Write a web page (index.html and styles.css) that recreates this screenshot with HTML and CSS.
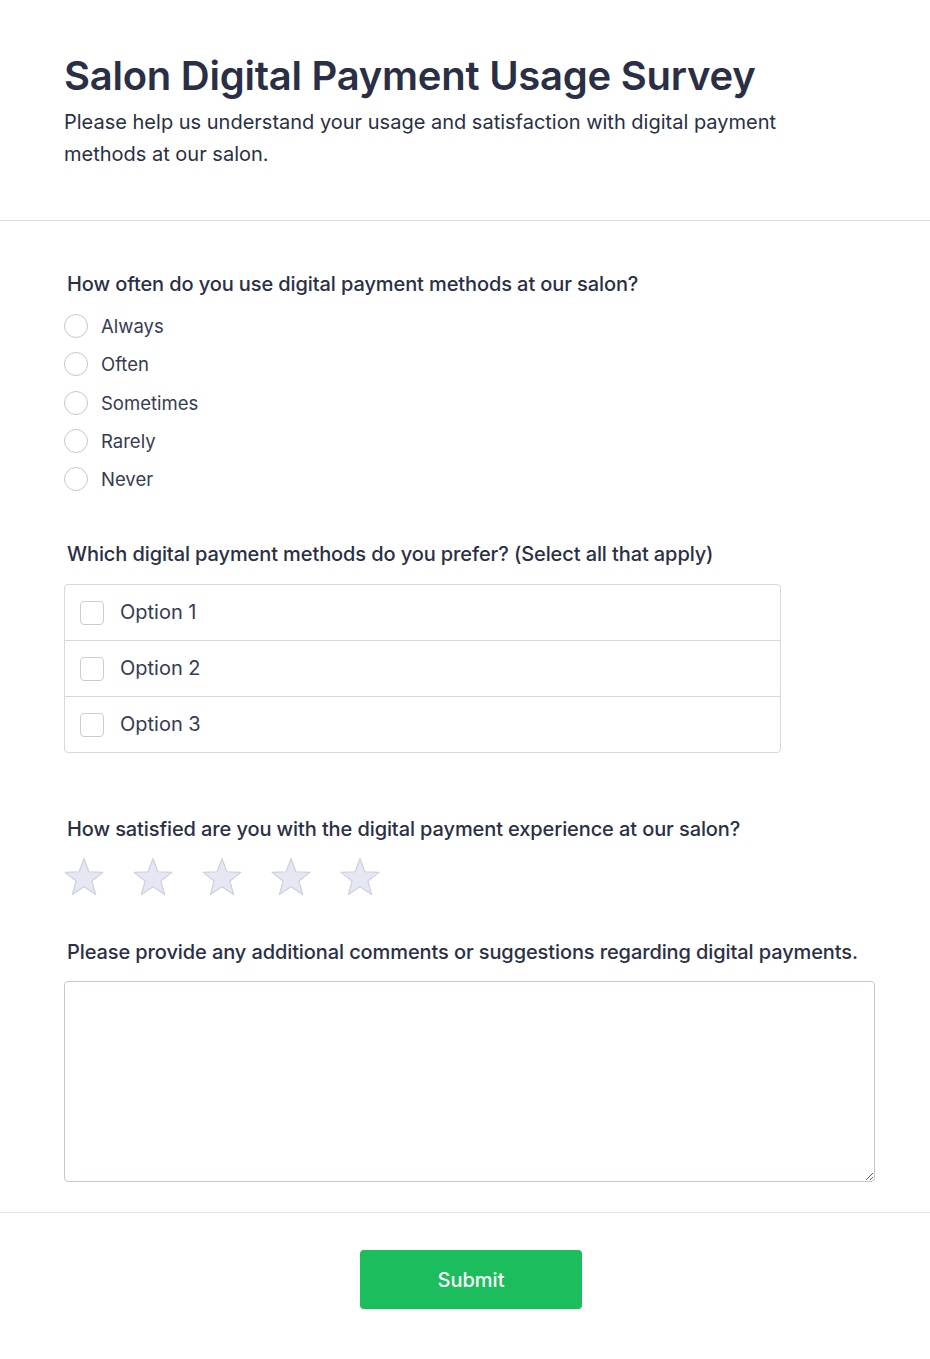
FILE: index.html
```html
<!DOCTYPE html>
<html lang="en">
<head>
<meta charset="utf-8">
<title>Salon Digital Payment Usage Survey</title>
<link rel="stylesheet" href="styles.css">
</head>
<body>
<header class="header">
  <h1 class="title">Salon Digital Payment Usage Survey</h1>
  <p class="desc">Please help us understand your usage and satisfaction with digital payment methods at our salon.</p>
</header>
<main class="main">
  <section class="question q-radio">
    <div class="qlabel">How often do you use digital payment methods at our salon?</div>
    <div class="radio-list">
      <label class="radio-row"><span class="radio"></span><span class="opt">Always</span></label>
      <label class="radio-row"><span class="radio"></span><span class="opt">Often</span></label>
      <label class="radio-row"><span class="radio"></span><span class="opt">Sometimes</span></label>
      <label class="radio-row"><span class="radio"></span><span class="opt">Rarely</span></label>
      <label class="radio-row"><span class="radio"></span><span class="opt">Never</span></label>
    </div>
  </section>
  <section class="question q-check">
    <div class="qlabel">Which digital payment methods do you prefer? (Select all that apply)</div>
    <div class="check-group">
      <label class="check-row"><span class="checkbox"></span><span class="opt">Option 1</span></label>
      <label class="check-row"><span class="checkbox"></span><span class="opt">Option 2</span></label>
      <label class="check-row"><span class="checkbox"></span><span class="opt">Option 3</span></label>
    </div>
  </section>
  <section class="question q-stars">
    <div class="qlabel">How satisfied are you with the digital payment experience at our salon?</div>
    <div class="stars">
      <svg class="star" viewBox="0 0 24 24"><path d="M12 1L14.94 8.85L23.32 9.22L16.76 14.45L18.99 22.53L12 17.9L5.01 22.53L7.24 14.45L0.68 9.22L9.06 8.85Z"/></svg>
      <svg class="star" viewBox="0 0 24 24"><path d="M12 1L14.94 8.85L23.32 9.22L16.76 14.45L18.99 22.53L12 17.9L5.01 22.53L7.24 14.45L0.68 9.22L9.06 8.85Z"/></svg>
      <svg class="star" viewBox="0 0 24 24"><path d="M12 1L14.94 8.85L23.32 9.22L16.76 14.45L18.99 22.53L12 17.9L5.01 22.53L7.24 14.45L0.68 9.22L9.06 8.85Z"/></svg>
      <svg class="star" viewBox="0 0 24 24"><path d="M12 1L14.94 8.85L23.32 9.22L16.76 14.45L18.99 22.53L12 17.9L5.01 22.53L7.24 14.45L0.68 9.22L9.06 8.85Z"/></svg>
      <svg class="star" viewBox="0 0 24 24"><path d="M12 1L14.94 8.85L23.32 9.22L16.76 14.45L18.99 22.53L12 17.9L5.01 22.53L7.24 14.45L0.68 9.22L9.06 8.85Z"/></svg>
    </div>
  </section>
  <section class="question q-text">
    <div class="qlabel">Please provide any additional comments or suggestions regarding digital payments.</div>
    <textarea class="comments"></textarea>
  </section>
</main>
<footer class="footer">
  <button class="submit" type="button">Submit</button>
</footer>
</body>
</html>
```

FILE: styles.css
```css
* { box-sizing: border-box; }

html, body {
  margin: 0;
  padding: 0;
  background: #ffffff;
}

body {
  font-family: Inter, "Noto Sans", "Liberation Sans", sans-serif;
  color: #2a2f45;
}

.header {
  padding: 52px 64px 50px;
  border-bottom: 1px solid #dcdde6;
}

.title {
  margin: 0;
  font-size: 40px;
  line-height: 48px;
  font-weight: 600;
  color: #2a2f45;
  letter-spacing: -0.25px;
}

.desc {
  margin: 6px 0 0;
  font-size: 20px;
  line-height: 32px;
  font-weight: 400;
  color: #2a2f45;
  max-width: 740px;
}

.main {
  padding: 50px 55px 30px 64px;
  display: flex;
  flex-direction: column;
}

.question {
  display: flex;
  flex-direction: column;
}

.qlabel {
  font-size: 20px;
  line-height: 26px;
  font-weight: 500;
  color: #2a2f45;
  padding-left: 3px;
  letter-spacing: -0.1px;
}

.q-radio .radio-list {
  margin-top: 10px;
  display: flex;
  flex-direction: column;
}

.radio-row {
  display: flex;
  align-items: center;
  height: 38.3px;
  gap: 13px;
}

.radio {
  width: 24px;
  height: 24px;
  border-radius: 50%;
  border: 1.5px solid #c3c6d3;
  background: #fff;
  flex: none;
}

.opt {
  font-size: 18.5px;
  line-height: 24px;
  color: #363b52;
}

.q-check {
  margin-top: 43px;
}

.check-group {
  margin-top: 17px;
  width: 717px;
  border: 1px solid #d7d9e1;
  border-radius: 4px;
  display: flex;
  flex-direction: column;
}

.check-row {
  display: flex;
  align-items: center;
  gap: 16px;
  height: 56px;
  padding-left: 15px;
  border-top: 1px solid #d7d9e1;
}

.check-row:first-child {
  border-top: none;
  height: 55px;
}

.checkbox {
  width: 24px;
  height: 24px;
  border: 1.5px solid #c9ccd7;
  border-radius: 4px;
  background: #fff;
  flex: none;
}

.check-row .opt {
  font-size: 20px;
  line-height: 24px;
  position: relative;
  top: -1px;
}

.q-stars {
  margin-top: 63px;
}

.stars {
  margin-top: 15px;
  display: flex;
  gap: 29px;
  height: 40px;
}

.star {
  width: 40px;
  height: 40px;
  display: block;
  overflow: visible;
}

.star path {
  fill: #e5e8f2;
  stroke: #cdd1df;
  stroke-width: 0.75;
  stroke-linejoin: round;
}

.q-text {
  margin-top: 42px;
}

.comments {
  margin-top: 16px;
  width: 811px;
  height: 201px;
  border: 1px solid #c3c6d4;
  border-radius: 4px;
  resize: vertical;
  font-family: inherit;
  font-size: 16px;
  display: block;
  outline: none;
}

.footer {
  border-top: 1px solid #e1e2ea;
  padding: 37px 52px 50px 64px;
  display: flex;
  justify-content: center;
}

.submit {
  width: 222px;
  height: 59px;
  border: none;
  border-radius: 4px;
  background: #1bbd5c;
  color: #ffffff;
  font-family: inherit;
  font-size: 20px;
  font-weight: 500;
  cursor: pointer;
}
```
